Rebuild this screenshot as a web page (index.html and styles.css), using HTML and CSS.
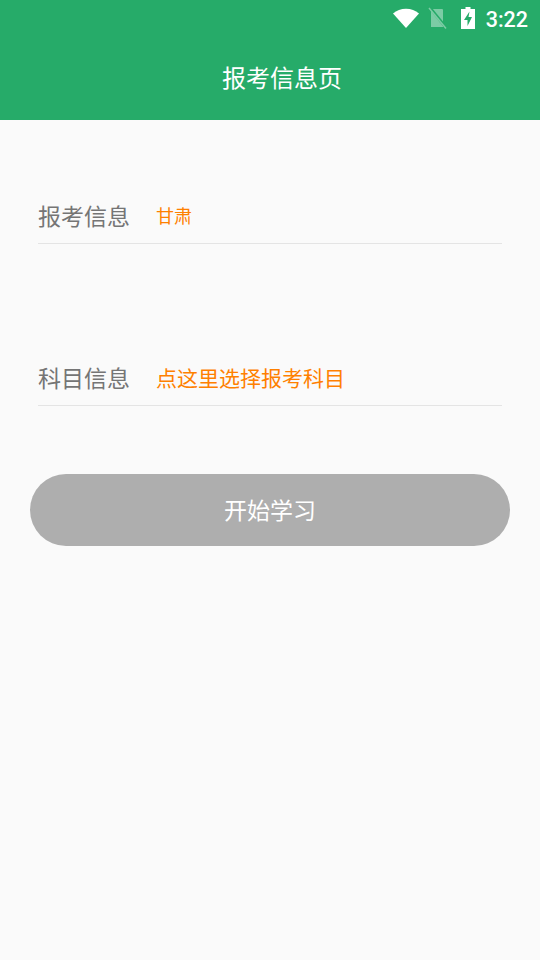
FILE: index.html
```
<!DOCTYPE html>
<html lang="zh-CN">
<head>
    <meta charset="UTF-8">
    <meta name="viewport" content="width=device-width, initial-scale=1.0">
    <title>报考信息页</title>
    <link rel="stylesheet" href="styles.css">
</head>
<body>
    <div class="header">
        <div class="status-bar">
            <svg class="icon-wifi" width="26" height="20" viewBox="0 0 26 20">
                <path d="M0 5.500C3.500 2.400 8 .8 13 .8s9.500 1.600 13 4.700L13 20z" fill="#fff"/>
            </svg>
            <svg class="icon-sim" width="20" height="22" viewBox="0 0 20 22">
                <path d="M5 2h10a1 1 0 0 1 1 1v17H4V3a1 1 0 0 1 1-1z" fill="#fff" fill-opacity="0.4"/>
                <path d="M3.500 1.500L18.500 20" stroke="#26ab69" stroke-width="3"/>
                <path d="M2 1l17 20.500" stroke="#fff" stroke-opacity="0.4" stroke-width="1.500"/>
            </svg>
            <svg class="icon-battery" width="14" height="22" viewBox="0 0 14 22">
                <path d="M4.500 0h5v2H14v20H0V2h4.500z" fill="#fff"/>
                <path d="M8.500 4.500L3 13H6.500v6L11 10H7.500z" fill="#26ab69"/>
            </svg>
            <span class="clock">3:22</span>
        </div>
        <div class="title">报考信息页</div>
    </div>

    <div class="form">
        <div class="row">
            <span class="label">报考信息</span>
            <span class="value value-small">甘肃</span>
        </div>
        <div class="row row-subject">
            <span class="label">科目信息</span>
            <span class="value">点这里选择报考科目</span>
        </div>
        <div class="start-btn">开始学习</div>
    </div>
</body>
</html>
```
FILE: styles.css
```
body {
    margin: 0;
    height: 960px;
    overflow: hidden;
    background-color: #fafafa;
    font-family: "Noto Sans CJK SC", Roboto, sans-serif;
}
.header {
    height: 120px;
    background-color: #26ab69;
    color: white;
}
.status-bar {
    height: 36px;
    display: flex;
    justify-content: flex-end;
    align-items: center;
    padding-right: 12px;
}
.icon-wifi {
    margin-right: 8px;
}
.icon-sim {
    margin-right: 14px;
}
.icon-battery {
    margin-right: 11px;
}
.clock {
    font-family: Roboto, sans-serif;
    font-size: 21.5px;
    font-weight: 500;
    padding-top: 2px;
}
.title {
    height: 84px;
    line-height: 82px;
    text-align: center;
    padding-left: 24px;
    font-size: 24px;
}
.form {
    padding: 62px 38px 0;
}
.row {
    height: 62px;
    padding-top: 4px;
    box-sizing: border-box;
    display: flex;
    align-items: center;
    gap: 26px;
    border-bottom: 1px solid #e4e4e4;
}
.row-subject {
    margin-top: 100px;
}
.label {
    font-size: 23px;
    color: #757575;
}
.value {
    font-size: 21px;
    color: #ff8000;
}
.value-small {
    font-size: 18px;
}
.start-btn {
    height: 72px;
    line-height: 70px;
    margin: 68px -8px 0;
    border-radius: 36px;
    background-color: #aeaeae;
    color: white;
    font-size: 23px;
    text-align: center;
}
```
